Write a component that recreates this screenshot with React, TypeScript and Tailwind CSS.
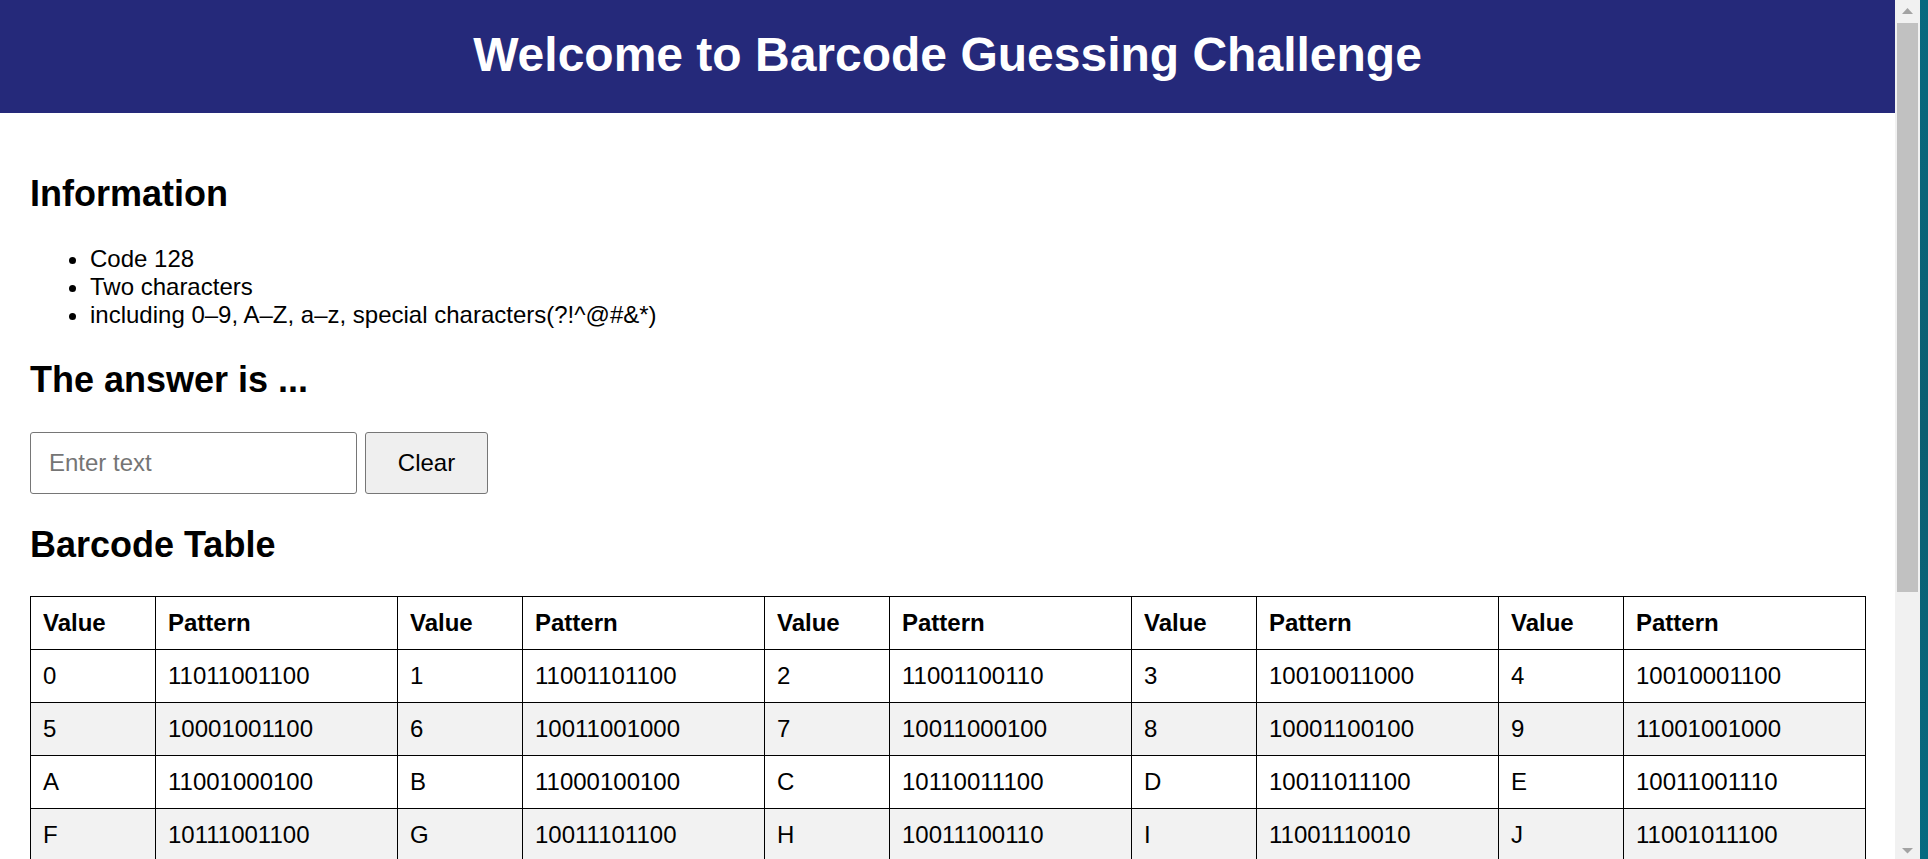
import React from "react";

const rows: [string, string][][] = [
  [["0", "11011001100"], ["1", "11001101100"], ["2", "11001100110"], ["3", "10010011000"], ["4", "10010001100"]],
  [["5", "10001001100"], ["6", "10011001000"], ["7", "10011000100"], ["8", "10001100100"], ["9", "11001001000"]],
  [["A", "11001000100"], ["B", "11000100100"], ["C", "10110011100"], ["D", "10011011100"], ["E", "10011001110"]],
  [["F", "10111001100"], ["G", "10011101100"], ["H", "10011100110"], ["I", "11001110010"], ["J", "11001011100"]],
  [["K", "11001001110"], ["L", "11011100100"], ["M", "11001110100"], ["N", "11101101110"], ["O", "11101001100"]],
];

export default function App() {
  return (
    <div className="flex h-[859px] w-[1928px] overflow-hidden bg-white font-['Liberation_Sans',Arial,sans-serif] text-black">
      <div className="flex w-[1895px] shrink-0 flex-col bg-white">
        <header className="h-[113px] shrink-0 bg-[#25297a] pt-[27px] text-center">
          <h1 className="text-[48px] font-bold leading-[55px] text-white">Welcome to Barcode Guessing Challenge</h1>
        </header>
        <main className="px-[30px]">
          <h2 className="mt-[60px] text-[36px] font-bold leading-[41px]">Information</h2>
          <ul className="mt-[31px] list-disc pl-[60px] text-[24px] leading-[28px]">
            <li>Code 128</li>
            <li>Two characters</li>
            <li>including 0–9, A–Z, a–z, special characters(?!^@#&amp;*)</li>
          </ul>
          <h2 className="mt-[30px] text-[36px] font-bold leading-[41px]">The answer is ...</h2>
          <div className="mt-[32px] flex items-start gap-[8px]">
            <input
              type="text"
              placeholder="Enter text"
              className="h-[62px] w-[327px] rounded-[3px] border border-[#767676] bg-white px-[18px] text-[24px] text-black outline-none placeholder:text-[#757575]"
            />
            <button className="h-[62px] w-[123px] rounded-[3px] border border-[#767676] bg-[#efefef] text-[24px] text-black">
              Clear
            </button>
          </div>
          <h2 className="mt-[30px] text-[36px] font-bold leading-[41px]">Barcode Table</h2>
          <table className="mt-[31px] w-[1835px] table-fixed border-collapse border border-black text-[24px]">
            <colgroup>
              <col className="w-[125px]" />
              <col className="w-[242px]" />
              <col className="w-[125px]" />
              <col className="w-[242px]" />
              <col className="w-[125px]" />
              <col className="w-[242px]" />
              <col className="w-[125px]" />
              <col className="w-[242px]" />
              <col className="w-[125px]" />
              <col className="w-[242px]" />
            </colgroup>
            <thead>
              <tr className="h-[53px]">
                {[0, 1, 2, 3, 4].map((i) => (
                  <React.Fragment key={i}>
                    <th className="border border-black px-[12px] text-left align-middle font-bold">Value</th>
                    <th className="border border-black px-[12px] text-left align-middle font-bold">Pattern</th>
                  </React.Fragment>
                ))}
              </tr>
            </thead>
            <tbody>
              {rows.map((row, r) => (
                <tr key={r} className={r % 2 === 1 ? "h-[53px] bg-[#f2f2f2]" : "h-[53px] bg-white"}>
                  {row.map(([v, p]) => (
                    <React.Fragment key={v}>
                      <td className="border border-black px-[12px] align-middle">{v}</td>
                      <td className="border border-black px-[12px] align-middle">{p}</td>
                    </React.Fragment>
                  ))}
                </tr>
              ))}
            </tbody>
          </table>
        </main>
      </div>
      <div className="flex w-[25px] shrink-0 flex-col bg-[#f1f1f1]">
        <div className="h-[23px] shrink-0">
          <svg width="25" height="23" viewBox="0 0 25 23">
            <polygon points="7,14 18,14 12.5,8" fill="#a3a3a3" />
          </svg>
        </div>
        <div className="mx-[2px] h-[569px] shrink-0 bg-[#c1c1c1]" />
        <div className="flex-1" />
        <div className="h-[23px] shrink-0">
          <svg width="25" height="23" viewBox="0 0 25 23">
            <polygon points="7,12 18,12 12.5,17.5" fill="#a3a3a3" />
          </svg>
        </div>
      </div>
      <div className="flex-1 bg-gradient-to-b from-[#07697f] via-[#0b5e71] to-[#066a80]" />
    </div>
  );
}
